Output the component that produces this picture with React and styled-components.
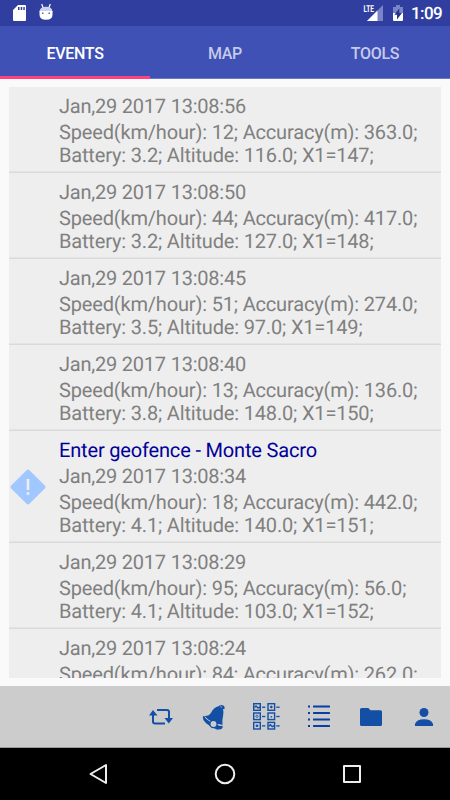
import React from "react";
import styled, { createGlobalStyle } from "styled-components";

const GlobalStyle = createGlobalStyle`
  * { box-sizing: border-box; }
  body { margin: 0; background: #fafafa; font-family: Roboto, "Liberation Sans", sans-serif; text-rendering: geometricPrecision; }
`;

const Screen = styled.div`
  width: 450px;
  height: 800px;
  display: flex;
  flex-direction: column;
  overflow: hidden;
  background: #fafafa;
`;

const StatusBar = styled.header`
  height: 26px;
  flex: none;
  display: flex;
  justify-content: space-between;
  padding: 0 9px 0 12px;
  background: #303f9f;
  color: #fff;
`;

const StatusGroup = styled.div`
  display: flex;
  align-items: flex-start;
`;

const StatusIcon = styled.svg`
  display: block;
  flex: none;
  margin-right: ${(p) => p.$gap || 0}px;
`;

const Clock = styled.span`
  width: 30px;
  font-size: 17px;
  font-weight: 500;
  letter-spacing: -0.6px;
  line-height: 28px;
  white-space: nowrap;
`;

const Tabs = styled.nav`
  height: 53px;
  flex: none;
  display: grid;
  grid-template-columns: repeat(3, 1fr);
  background: #3f51b5;
  border-bottom: 1px solid #6c7ac6;
`;

const Tab = styled.button`
  height: 53px;
  border: 0;
  padding: 3px 0 0;
  background: none;
  font: 500 16px/24px Roboto, sans-serif;
  letter-spacing: -0.3px;
  color: ${(p) => (p.$active ? "#fff" : "#c5cae9")};
  box-shadow: ${(p) => (p.$active ? "inset 0 -3px #ff4081" : "none")};
`;

const Content = styled.main`
  flex: 1;
  min-height: 0;
  padding: 8px 9px 8px;
`;

const EventList = styled.ul`
  height: 100%;
  margin: 0;
  padding: 0;
  overflow: hidden;
  list-style: none;
  background: #eee;
`;

const EventRow = styled.li`
  height: ${(p) => (p.$tall ? 112 : 86)}px;
  display: grid;
  grid-template-columns: 50px 1fr;
  box-shadow: inset 0 -1px #dadada, inset 0 -2px #e4e4e4;
`;

const Marker = styled.div`
  display: flex;
  align-items: center;
  padding-left: 1px;
`;

const EventText = styled.div`
  padding-top: ${(p) => (p.$titled ? 6 : 7)}px;
  font-size: 20px;
  letter-spacing: -0.17px;
  color: #808080;
  white-space: nowrap;
`;

const Title = styled.div`
  line-height: 26px;
  color: #00009a;
`;

const EventDate = styled.div`
  padding-top: ${(p) => (p.$titled ? 1 : 0)}px;
  line-height: 25px;
  letter-spacing: -0.22px;
`;

const Detail = styled.div`
  padding-top: 2px;
  line-height: 23px;
`;

const Toolbar = styled.footer`
  height: 62px;
  flex: none;
  display: flex;
  justify-content: flex-end;
  background: #ccc;
  border-bottom: 1px solid #999;
`;

const ToolButton = styled.button`
  width: 52.5px;
  border: 0;
  padding: 0;
  background: none;
  color: #124fa5;
  display: flex;
  align-items: center;
  justify-content: center;
`;

const NavBar = styled.div`
  height: 52px;
  flex: none;
  display: grid;
  grid-template-columns: 99px 126px 126.5px;
  background: #000;
`;

const NavButton = styled.button`
  border: 0;
  padding: 0;
  background: none;
  display: flex;
  align-items: center;
  justify-content: flex-end;
`;

const NavIcon = styled.svg`
  margin-right: -12px;
  fill: none;
  stroke: #eee;
  stroke-width: 2;
  stroke-linejoin: round;
`;

const LteLabel = styled.text`
  font: 700 9.6px Roboto, sans-serif;
  fill: #fff;
`;

const events = [
  ["13:08:56", 12, "363.0", "3.2", "116.0", 147],
  ["13:08:50", 44, "417.0", "3.2", "127.0", 148],
  ["13:08:45", 51, "274.0", "3.5", "97.0", 149],
  ["13:08:40", 13, "136.0", "3.8", "148.0", 150],
  ["13:08:34", 18, "442.0", "4.1", "140.0", 151, "Enter geofence - Monte Sacro"],
  ["13:08:29", 95, "56.0", "4.1", "103.0", 152],
  ["13:08:24", 84, "262.0", "4.1", "121.0", 153],
];

const SdCard = () => (
  <StatusIcon $gap={12} width="15" height="26">
    <path fill="#fff" fillRule="evenodd" d="M6 5h7q1 0 1 1v14q0 1-1 1H2q-1 0-1-1V10zM6 7v3h1.500V7zm2.700 0v3h1.500V7zm2.600 0v3h1.500V7z" />
  </StatusIcon>
);

const AndroidHead = () => (
  <StatusIcon width="15" height="26">
    <path fill="none" stroke="#fff" strokeWidth="1.200" d="M2.700 4l1.500 4M11.300 4l-1.500 4" />
    <path fill="#cdd1ea" d="M.5 12Q.5 6.800 7 6.800t6.500 5.200z" />
    <path fill="#fff" d="M.5 11h13v3.500q0 5.300-6.500 5.300T.5 14.500z" />
    <path fill="#5965b2" d="M3 12.500h1.500V14H3zM9.500 12.500H11V14H9.500z" />
  </StatusIcon>
);

const Signal = () => (
  <StatusIcon $gap={8} width="22" height="26">
    <path fill="#7985c6" d="M21 5v16H5z" />
    <path fill="#fff" d="M15.500 10.500V21H5z" />
    <LteLabel x="1.500" y="12" textLength="10.500" lengthAdjust="spacingAndGlyphs">LTE</LteLabel>
  </StatusIcon>
);

const Battery = () => (
  <StatusIcon $gap={7.5} width="12" height="26">
    <path fill="#7985c6" d="M4 5h4v2h3v7H1V7h3z" />
    <path fill="#fff" d="M1 13h10v7q0 1-1 1H2q-1 0-1-1z" />
    <path fill="#26338c" d="M7.300 8.500v4.500H10l-5 6.500v-4.800H2.300z" />
  </StatusIcon>
);

const Warning = () => (
  <svg width="36" height="36" viewBox="0 0 36 36">
    <rect x="5.100" y="5.100" width="25.800" height="25.800" rx="2" fill="#a0c8ff" transform="rotate(45 18 18)" />
    <path d="M16.700 10h2.600v11h-2.600zM16.700 23.300h2.600v2.500h-2.600z" fill="#eee" />
  </svg>
);

const RepeatIcon = () => (
  <svg width="24" height="18" viewBox="0 0 24 18" fill="currentColor">
    <path fill="none" stroke="currentColor" strokeWidth="2" strokeLinejoin="round" d="M8 2h10q2 0 2 2v7M16 15.500H6q-2 0-2-2V6" />
    <path d="M0 7.500L4 2l4.500 5.500zM15.500 10H24l-4.200 5.500z" />
  </svg>
);

const BellIcon = () => (
  <svg width="24" height="26" viewBox="0 0 24 26">
    <g fill="currentColor">
      <path d="M16.500 2.300q2.200-2.400 4.800-.7 2.100 1.500.9 3.700l-1.500-.2q.8 1.200.7 3.400-.2 4-.8 6-.5 3 .1 6.200Q8.500 20 2.500 12q4.600.2 6.700-3.500Q12 3.200 16.500 2.300z" />
      <path d="M1.700 11.700Q9.500 20 20.700 22l-.2 1.700q-.4 1.700-3.400 1.700h-2.500Q.1 19 .8 13z" />
    </g>
    <path d="M3 13.300q6.700 6.300 16.200 8.400" fill="none" stroke="#ccc" strokeWidth="1" />
    <circle cx="11.500" cy="20" r="3.600" fill="#ccc" stroke="#124fa5" strokeWidth="1.300" />
    <path d="M18.500 1.700l1 2" stroke="#ccc" strokeWidth=".8" />
  </svg>
);

const codeCells = [
  [0, 0, "wave"], [14.3, 0, "dot"],
  [0, 9.3, "ring"], [14.3, 9.3, "small"],
  [0, 18.7, "dot"], [14.3, 18.7, "wave"],
];

const CodesIcon = () => (
  <svg width="27" height="27" viewBox="0 0 27 27">
    {codeCells.map(([x, y, kind]) => (
      <g key={`${x}-${y}`} transform={`translate(${x} ${y})`} fill="none" stroke="#124fa5" strokeWidth="1.400">
        <rect x=".7" y=".7" width="6.600" height="6.600" />
        <path d="M9 4.200h3.300" strokeWidth="1.300" />
        {kind === "wave" && <path d="M1.500 4.500L3 3l2 2 2-1" />}
        {kind === "dot" && <path d="M2.700 4h2.600M4 2.700v2.600" />}
        {kind === "ring" && <circle cx="4" cy="4" r="1.200" strokeWidth=".8" />}
        {kind === "small" && <path d="M3.300 4.500h1.500" />}
      </g>
    ))}
  </svg>
);

const ListIcon = () => (
  <svg width="22" height="23" viewBox="0 0 22 23" fill="#073fa4">
    {[0.5, 7, 13.5, 20].map((y) => (
      <g key={y}>
        <rect x="0" y={y} width="2" height="2" />
        <rect x="5" y={y} width="17" height="2" rx=".5" />
      </g>
    ))}
  </svg>
);

const FolderIcon = () => (
  <svg width="22" height="18" viewBox="0 0 22 18" fill="currentColor">
    <path d="M1.500 0h6.800l2.200 2.300h10q1.500 0 1.500 1.500v12.700q0 1.500-1.500 1.500h-19Q0 18 0 16.500v-15Q0 0 1.500 0z" />
  </svg>
);

const PersonIcon = () => (
  <svg width="18" height="18" viewBox="0 0 18 18" fill="currentColor">
    <circle cx="9" cy="4.500" r="4.500" />
    <path d="M0 18v-2.300Q2 11.300 9 11.300t9 4.400V18z" />
  </svg>
);

const tools = [
  ["Refresh", RepeatIcon], ["Alerts", BellIcon], ["Codes", CodesIcon],
  ["List", ListIcon], ["Folder", FolderIcon], ["Account", PersonIcon],
];

export default function App() {
  return (
    <Screen>
      <GlobalStyle />
      <StatusBar>
        <StatusGroup><SdCard /><AndroidHead /></StatusGroup>
        <StatusGroup><Signal /><Battery /><Clock>1:09</Clock></StatusGroup>
      </StatusBar>
      <Tabs>
        <Tab $active>EVENTS</Tab>
        <Tab>MAP</Tab>
        <Tab>TOOLS</Tab>
      </Tabs>
      <Content>
        <EventList>
          {events.map(([time, speed, accuracy, battery, altitude, x1, title]) => (
            <EventRow key={time} $tall={!!title}>
              <Marker>{title && <Warning />}</Marker>
              <EventText $titled={!!title}>
                {title && <Title>{title}</Title>}
                <EventDate $titled={!!title}>Jan,29 2017 {time}</EventDate>
                <Detail>
                  Speed(km/hour): {speed}; Accuracy(m): {accuracy};<br />
                  Battery: {battery}; Altitude: {altitude}; X1={x1};
                </Detail>
              </EventText>
            </EventRow>
          ))}
        </EventList>
      </Content>
      <Toolbar>
        {tools.map(([name, Icon]) => (
          <ToolButton key={name} aria-label={name}><Icon /></ToolButton>
        ))}
      </Toolbar>
      <NavBar>
        <NavButton aria-label="Back">
          <NavIcon width="24" height="24"><path d="M19 3v18L3.500 12z" /></NavIcon>
        </NavButton>
        <NavButton aria-label="Home">
          <NavIcon width="24" height="24"><circle cx="12" cy="12" r="9.300" /></NavIcon>
        </NavButton>
        <NavButton aria-label="Recents">
          <NavIcon width="24" height="24"><rect x="4" y="4" width="16" height="16" /></NavIcon>
        </NavButton>
      </NavBar>
    </Screen>
  );
}
